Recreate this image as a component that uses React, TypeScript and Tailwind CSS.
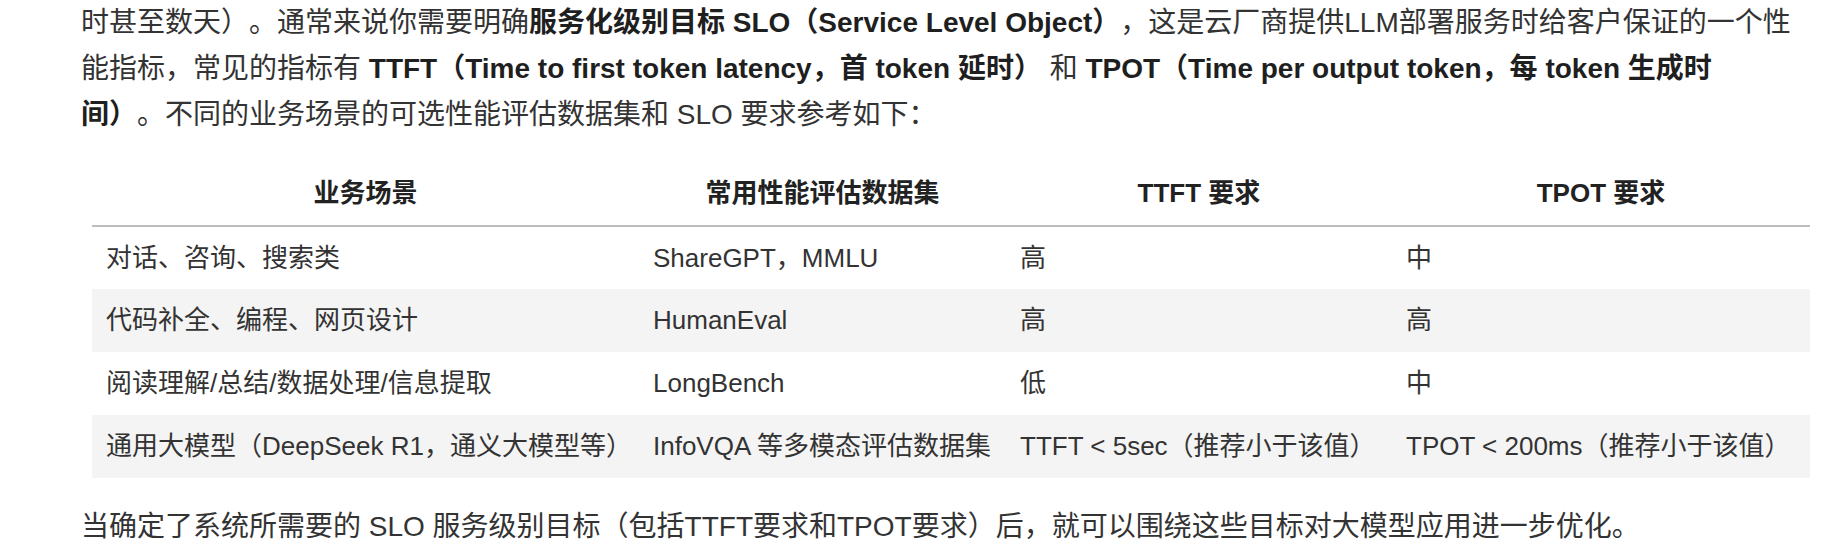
const rows = [
  ['对话、咨询、搜索类', 'ShareGPT，MMLU', '高', '中'],
  ['代码补全、编程、网页设计', 'HumanEval', '高', '高'],
  ['阅读理解/总结/数据处理/信息提取', 'LongBench', '低', '中'],
  ['通用大模型（DeepSeek R1，通义大模型等）', 'InfoVQA 等多模态评估数据集', 'TTFT < 5sec（推荐小于该值）', 'TPOT < 200ms（推荐小于该值）'],
];

const heads = ['业务场景', '常用性能评估数据集', 'TTFT 要求', 'TPOT 要求'];

const App = () => {
  return (
    <div
      className="w-[1846px] h-[556px] overflow-hidden bg-white text-[#333] [text-spacing-trim:space-all]"
      style={{ fontFamily: '"Liberation Sans", "Noto Sans CJK SC", sans-serif' }}
    >
      <div className="pl-[81px] pr-[36px]">
        {/* intro paragraph */}
        <p className="text-[28px] leading-[46px] whitespace-nowrap">
          时甚至数天）。通常来说你需要明确<b className="font-bold text-[#1f1f1f]">服务化级别目标 SLO（Service Level Object）</b>，这是云厂商提供LLM部署服务时给客户保证的一个性
          <br />
          能指标，常见的指标有 <b className="font-bold text-[#1f1f1f]">TTFT（Time to first token latency，首 token 延时）</b> 和 <b className="font-bold text-[#1f1f1f]">TPOT（Time per output token，每 token 生成时</b>
          <br />
          <b className="font-bold text-[#1f1f1f]">间）</b>。不同的业务场景的可选性能评估数据集和 SLO 要求参考如下：
        </p>

        {/* SLO table */}
        <table className="mt-[24px] ml-[11px] w-[1718px] table-fixed border-collapse text-[26px]">
          <colgroup>
            <col className="w-[547px]" />
            <col className="w-[367px]" />
            <col className="w-[386px]" />
            <col className="w-[418px]" />
          </colgroup>
          <thead>
            <tr className="h-[64px] border-b-2 border-[#bdbdbd]">
              {heads.map((h) => (
                <th key={h} className="px-[14px] text-center font-bold text-[#222]">
                  {h}
                </th>
              ))}
            </tr>
          </thead>
          <tbody>
            {rows.map((r, i) => (
              <tr key={i} className={i % 2 === 1 ? 'h-[63px] bg-[#f4f4f4]' : 'h-[63px] bg-white'}>
                {r.map((c, j) => (
                  <td key={j} className="px-[14px] whitespace-nowrap text-left">
                    {c}
                  </td>
                ))}
              </tr>
            ))}
          </tbody>
        </table>

        <p className="mt-[26px] text-[28px] leading-[46px] whitespace-nowrap">
          当确定了系统所需要的 SLO 服务级别目标（包括TTFT要求和TPOT要求）后，就可以围绕这些目标对大模型应用进一步优化。
        </p>
      </div>
    </div>
  );
};

export default App;
